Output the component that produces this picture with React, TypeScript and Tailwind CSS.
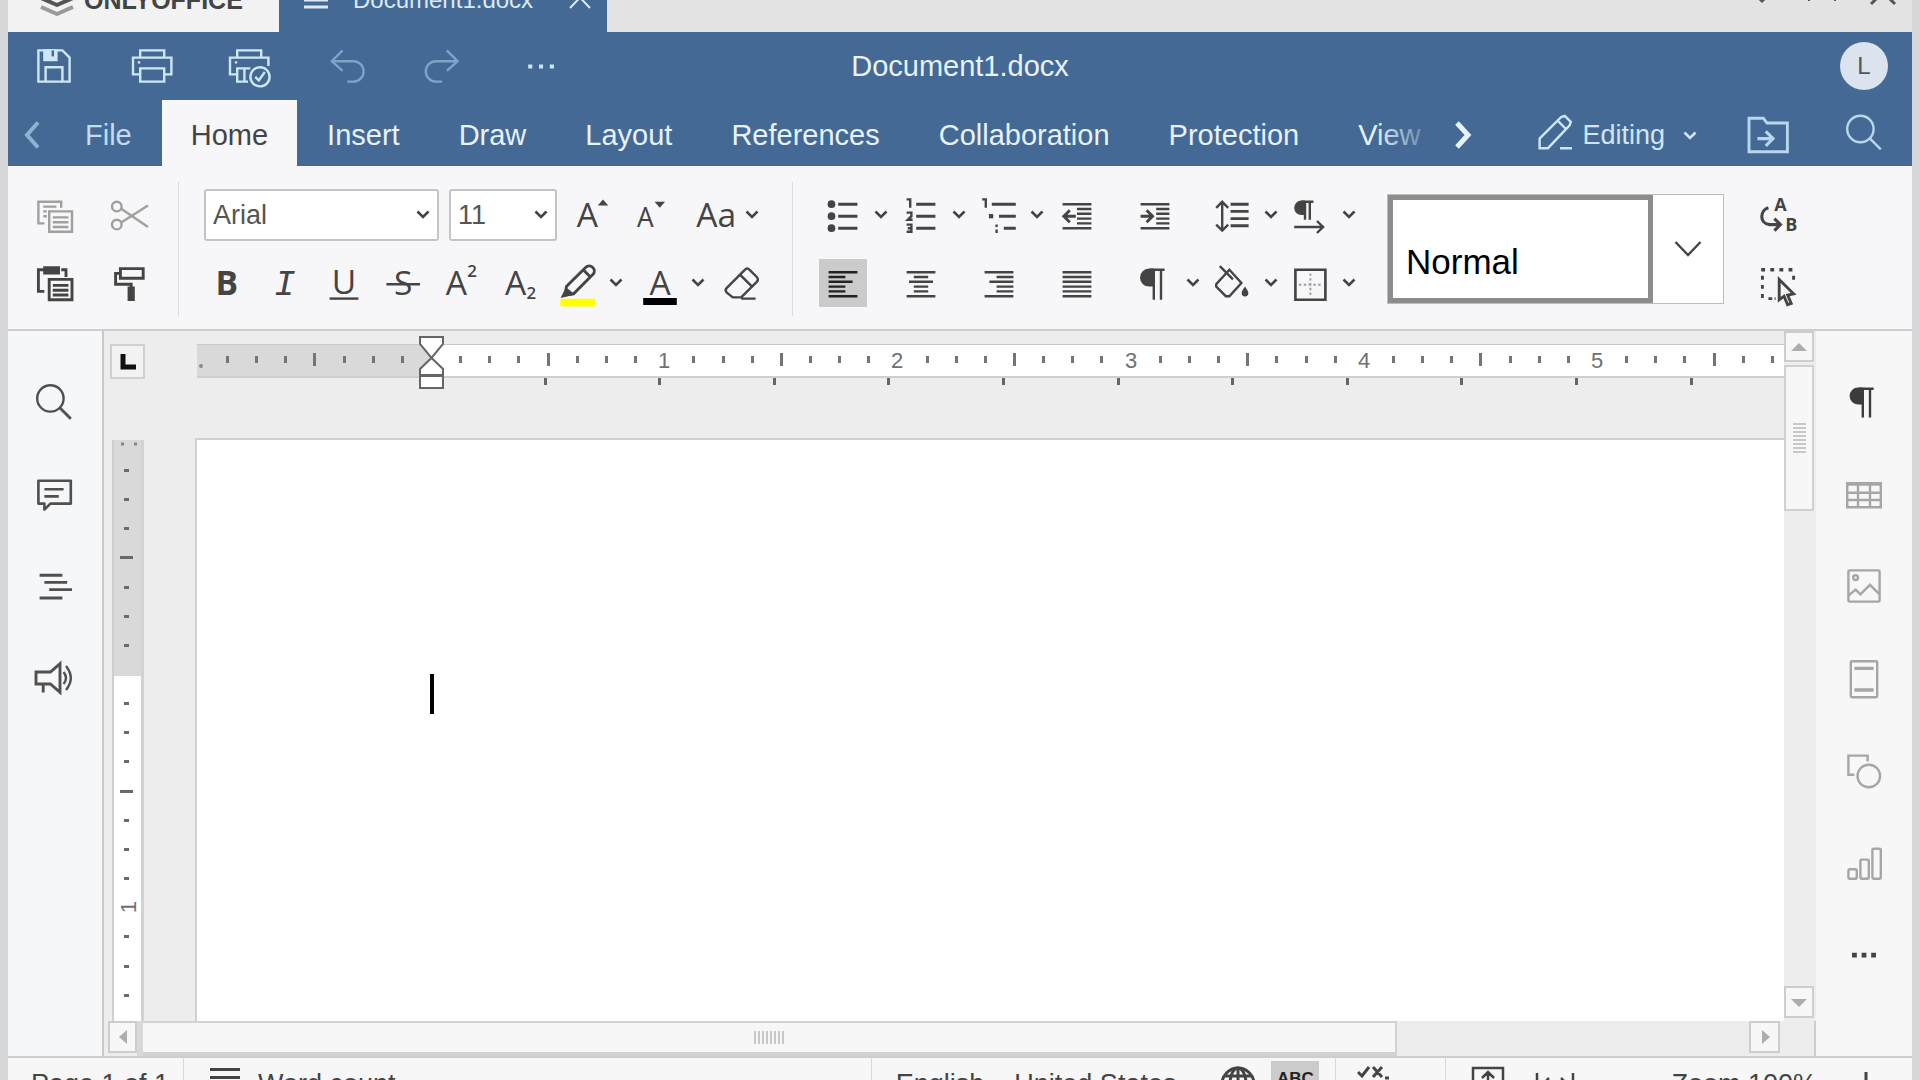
import React from "react";

type IconProps = { children: React.ReactNode; className?: string; label?: string };

/* 20-unit icon grid drawn at 48px */
function Icon({ children, className = "" }: IconProps) {
  return (
    <svg
      viewBox="0 0 20 20"
      className={`size-12 shrink-0 ${className}`}
      fill="none"
      stroke="currentColor"
      strokeWidth="1"
      aria-hidden="true"
    >
      {children}
    </svg>
  );
}

function IconButton({ children, label = "", className = "" }: IconProps) {
  return (
    <button type="button" aria-label={label} title={label} className={`flex size-12 shrink-0 items-center justify-center ${className}`}>
      <Icon>{children}</Icon>
    </button>
  );
}

function Caret({ className = "" }: { className?: string }) {
  return (
    <svg viewBox="0 0 14 9" className={`h-[9px] w-[14px] shrink-0 ${className}`} fill="none" stroke="currentColor" strokeWidth="2.6" aria-hidden="true">
      <path d="M1.5 1.5 7 7l5.500-5.500" />
    </svg>
  );
}

function DropButton({ label, className = "" }: { label: string; className?: string }) {
  return (
    <button type="button" aria-label={label} className={`flex h-12 shrink-0 items-center justify-center ${className}`}>
      <Caret />
    </button>
  );
}

function Letter({ x, y = 15, size = 14, weight = 400, children }: { x: number; y?: number; size?: number; weight?: number; children: string }) {
  return (
    <text x={x} y={y} fontSize={size} fontWeight={weight} fontFamily="'Open Sans', sans-serif" textAnchor="middle" fill="currentColor" stroke="none">
      {children}
    </text>
  );
}

const TABS = ["File", "Home", "Insert", "Draw", "Layout", "References", "Collaboration", "Protection", "View"];

function TitleStrip() {
  return (
    <div className="flex h-8 shrink-0 items-end overflow-hidden bg-[#e3e3e3]">
      <button type="button" className="flex h-16 w-[271px] shrink-0 items-center bg-[#f2f2f2] pl-[31px] text-[25px] leading-8 font-bold text-[#444]">
        <svg viewBox="0 0 36 48" className="mr-[9px] h-12 w-9 shrink-0" fill="none" strokeWidth="4" strokeLinejoin="round" aria-hidden="true">
          <path d="M2 13 18 6l16 7-16 7z" fill="#555" stroke="#555" strokeWidth="2" />
          <path d="m2 22 16 7 16-7" stroke="#555" />
          <path d="m2 31 16 7 16-7" stroke="#999" />
        </svg>
        ONLYOFFICE
      </button>
      <div className="flex h-16 w-[328px] shrink-0 items-center bg-[#446995] pl-[25px] text-[#dceaf7]">
        <svg viewBox="0 0 24 24" className="mr-[25px] size-6 shrink-0" stroke="currentColor" strokeWidth="3" aria-hidden="true">
          <path d="M0 5h24M0 12h24M0 19h24" />
        </svg>
        <span className="text-[24px] leading-8">Document1.docx</span>
        <button type="button" aria-label="Close tab" className="ml-[36px]">
          <svg viewBox="0 0 22 28" className="h-7 w-[22px]" stroke="currentColor" strokeWidth="2" aria-hidden="true">
            <path d="m1 1 20 21M21 1 1 22" />
          </svg>
        </button>
      </div>
      <div className="ml-auto flex h-16 items-center gap-[34px] pr-4 text-[#555]">
        <button type="button" aria-label="Minimize">
          <svg viewBox="0 0 24 48" className="h-12 w-6" fill="none" stroke="currentColor" strokeWidth="3" aria-hidden="true">
            <path d="m2 15 10 10 10-10" />
          </svg>
        </button>
        <button type="button" aria-label="Restore">
          <svg viewBox="0 0 28 48" className="h-12 w-7" fill="none" stroke="currentColor" strokeWidth="2" aria-hidden="true">
            <path d="M1 25V9h17M27 25V15" />
          </svg>
        </button>
        <button type="button" aria-label="Close">
          <svg viewBox="0 0 26 48" className="h-12 w-[26px]" stroke="currentColor" strokeWidth="3" aria-hidden="true">
            <path d="m1 4 24 24M25 4 1 28" />
          </svg>
        </button>
      </div>
    </div>
  );
}

function Header() {
  return (
    <header className="grid h-[68px] shrink-0 grid-cols-[1fr_auto_1fr] items-center bg-[#446995] text-[#cfe6f8]">
      <div className="flex items-center gap-[49px] pl-[22px]">
        <IconButton label="Save">
          <path d="M3.500 3.500h10l3 3v10h-13z" />
          <path d="M6 3.500h5v4H6z" fill="currentColor" />
          <path d="M9.500 3.500v2.500" stroke="#446995" />
          <path d="M6.500 16.500v-6h7v6" />
        </IconButton>
        <IconButton label="Print">
          <path d="M5.500 7V3.500h10V7M5.500 13.500h-3v-7h16v7h-3" />
          <path d="M5.500 11h10v5.500h-10z" />
          <path d="M4.500 8.500h1" />
        </IconButton>
        <IconButton label="Quick print">
          <path d="M5.500 7V3.500h10V7M5.500 13.500h-3v-7h16v3.500" />
          <path d="M10 16.500H5.500V11h5.500M8.500 11.500v5M4.500 8.500h1" />
          <circle cx="15" cy="14.500" r="4" />
          <path d="m13 14.500 1.500 1.500 2.500-3.500" />
        </IconButton>
        <IconButton label="Undo" className="text-[#7fa3c6]">
          <path d="M9 3.500 4.500 8 9 12M4.500 8h9a4.250 4.250 0 0 1 0 8.500H11" />
        </IconButton>
        <IconButton label="Redo" className="text-[#7fa3c6]">
          <path d="m12 3.500 4.500 4.500-4.500 4M16.500 8h-9a4.250 4.250 0 0 0 0 8.500H10" />
        </IconButton>
        <IconButton label="More">
          <path d="M5.500 10.200h1.700M10 10.200h1.700M14.500 10.200h1.700" strokeWidth="1.700" />
        </IconButton>
      </div>
      <h1 className="text-[29px] leading-9 text-[#e6f2fc]">Document1.docx</h1>
      <button type="button" aria-label="User L" className="mr-6 flex size-12 items-center justify-center justify-self-end rounded-full bg-[#dbe3ee] text-[24px] leading-8 text-[#555]">
        L
      </button>
    </header>
  );
}

function TabRow() {
  return (
    <nav aria-label="Ribbon tabs" className="flex h-[66px] shrink-0 bg-[#446995] text-[29px] leading-9 text-[#e6f2fc]">
      <button type="button" aria-label="Scroll tabs left" className="flex w-12 shrink-0 items-center justify-center pt-1 text-[#8fb2d2]">
        <svg viewBox="0 0 18 28" className="h-7 w-[18px]" fill="none" stroke="currentColor" strokeWidth="4" aria-hidden="true">
          <path d="M15 1.500 4 14l11 12.500" />
        </svg>
      </button>
      <div className="relative flex min-w-0 flex-1 gap-px overflow-hidden">
        {TABS.map((t) => (
          <button
            key={t}
            type="button"
            aria-current={t === "Home" ? "page" : undefined}
            className={`shrink-0 px-[29px] pt-1 ${t === "Home" ? "bg-[#f7f7f9] text-[#444]" : t === "File" ? "text-[#c4dcf0]" : ""}`}
          >
            {t}
          </button>
        ))}
        <div className="pointer-events-none absolute inset-y-0 right-0 w-16 bg-linear-to-r from-[#446995]/0 to-[#446995]" />
      </div>
      <button type="button" aria-label="Scroll tabs right" className="flex w-12 shrink-0 items-center justify-center pt-1">
        <svg viewBox="0 0 18 28" className="h-7 w-[18px]" fill="none" stroke="currentColor" strokeWidth="5" aria-hidden="true">
          <path d="M3 2l11 12L3 26" />
        </svg>
      </button>
      <button type="button" className="ml-[43px] flex shrink-0 items-center pt-1 text-[27px] text-[#cfe6f8]">
        <Icon className="mr-[4px]">
          <path d="M4 15.500v-4L13 2.500l1.500-.5 2.500 2.500-.5 1.500-9 9.500zM11.500 4l3.500 3.500M12.500 15.500h5" />
        </Icon>
        Editing
        <Caret className="ml-[18px]" />
      </button>
      <div className="ml-[46px] flex shrink-0 items-center gap-[49px] pt-1 pr-6 text-[#b9d6ee]">
        <IconButton label="Open file location">
          <path d="M2.500 3h6l1.500 2h8.500v12h-16z" strokeWidth="1.200" />
          <path d="M6 11.500h6M9.500 8.500l3 3-3 3" strokeWidth="1.300" />
        </IconButton>
        <IconButton label="Search">
          <circle cx="8.500" cy="7.500" r="5.500" />
          <path d="m12.500 11.500 4.500 4.500" />
        </IconButton>
      </div>
    </nav>
  );
}

function Combo({ label, value, options, className }: { label: string; value: string; options: string[]; className: string }) {
  return (
    <label className={`relative flex h-[52px] shrink-0 items-center ${className}`}>
      <span className="sr-only">{label}</span>
      <select
        defaultValue={value}
        className="h-full w-full appearance-none rounded-[3px] border-2 border-[#c4c4c6] bg-white pl-[7px] text-[27px] leading-8 text-[#555]"
      >
        {options.map((o) => (
          <option key={o}>{o}</option>
        ))}
      </select>
      <Caret className="pointer-events-none absolute right-[9px]" />
    </label>
  );
}

const Divider = ({ className }: { className: string }) => <div className={`h-[134px] w-px shrink-0 bg-[#dcdcde] ${className}`} />;

const pilcrow = (
  <>
    <path d="M9 4.500H7.500a3.250 3.250 0 0 0 0 6.500H9z" fill="currentColor" />
    <path d="M9.500 4v13M12.500 4v13M8 4.500h6" />
  </>
);

function ParagraphTools() {
  const rows: { label: string; drop: boolean; active?: boolean; art: React.ReactNode }[][] = [
    [
      {
        label: "Bullets",
        drop: true,
        art: (
          <>
            <path d="M8 5.500h8M8 10.500h8M8 15.500h8" strokeWidth="1.200" />
            <g fill="currentColor" stroke="none">
              <circle cx="5.200" cy="5.500" r="1.600" />
              <circle cx="5.200" cy="10.500" r="1.600" />
              <circle cx="5.200" cy="15.500" r="1.600" />
            </g>
          </>
        ),
      },
      {
        label: "Numbering",
        drop: true,
        art: (
          <>
            <path d="M8 5.500h8M8 10.500h8M8 15.500h8" strokeWidth="1.200" />
            <path d="M4 3.500h1.500V7M4 9h2v1.500L4.500 12H6.500M4 14h2v3H4M4.500 15.500H6" />
          </>
        ),
      },
      {
        label: "Multilevel list",
        drop: true,
        art: (
          <>
            <path d="M7 5.500h10M10 10.500h7M12 15.500h5" strokeWidth="1.200" />
            <path d="M3 3.500h1.500V7M9 14v1M9 16v1.500" />
            <path d="M5.800 10.500h1.800" strokeWidth="1.800" />
          </>
        ),
      },
      {
        label: "Decrease indent",
        drop: false,
        art: (
          <>
            <path d="M4 5.500h12M10 7.500h6M10 9.500h6M10 11.500h6M10 13.500h6M4 15.500h12" />
            <path d="M9.500 10.500h-5M7 8l-2.500 2.500L7 13" strokeWidth="1.200" />
          </>
        ),
      },
      {
        label: "Increase indent",
        drop: false,
        art: (
          <>
            <path d="M4 5.500h12M10.500 7.500H16M10.500 9.500H16M10.500 11.500H16M10.500 13.500H16M4 15.500h12" />
            <path d="M4 10.500h5M6.500 8 9 10.500 6.500 13" strokeWidth="1.200" />
          </>
        ),
      },
      {
        label: "Line spacing",
        drop: true,
        art: (
          <>
            <path d="M9 5.500h7.500M9 8.500h7.500M9 11.500h7.500M9 14.500h7.500" strokeWidth="1.200" />
            <path d="M5.500 4.500v12M3 7l2.500-2.500L8 7M3 14l2.500 2.500L8 14" />
          </>
        ),
      },
      {
        label: "Text direction",
        drop: true,
        art: (
          <>
            <path d="M7 4.500H6a2.250 2.250 0 0 0 0 5h1z" fill="currentColor" />
            <path d="M7.500 4v8M9.500 4v8M6 4.500h5M3 15h12.500M12.500 12.500 15 15l-2.500 2.500" />
          </>
        ),
      },
    ],
    [
      { label: "Align left", drop: false, active: true, art: <path d="M4 5.500h12M4 7.500h7M4 9.500h10M4 11.500h7M4 13.500h7M4 15.500h12" /> },
      { label: "Align center", drop: false, art: <path d="M4 5.500h12M7 7.500h6M5 9.500h10M7 11.500h6M7 13.500h6M4 15.500h12" /> },
      { label: "Align right", drop: false, art: <path d="M4 5.500h12M9 7.500h7M6 9.500h10M9 11.500h7M9 13.500h7M4 15.500h12" /> },
      { label: "Justify", drop: false, art: <path d="M4 5.500h12M4 7.500h12M4 9.500h12M4 11.500h12M4 13.500h12M4 15.500h12" /> },
      { label: "Nonprinting characters", drop: true, art: pilcrow },
      {
        label: "Shading",
        drop: true,
        art: (
          <>
            <path d="m8.500 4.500 5 5.500L8.500 15.500H7L3 11.500v-1zM4.500 3l5.500 5.500" />
            <path d="M15 11.500c1 1.500 1.400 2 1.400 2.700a1.400 1.400 0 0 1-2.800 0c0-.7.400-1.200 1.400-2.700z" fill="currentColor" stroke="none" />
          </>
        ),
      },
      {
        label: "Borders",
        drop: true,
        art: (
          <>
            <path d="M3.500 4.500h12.500v12.500h-12.500z" strokeWidth="1.100" />
            <path d="M9.750 6v10M5 10.750h10" strokeDasharray="1 1" strokeWidth=".8" opacity=".5" />
          </>
        ),
      },
    ],
  ];
  return (
    <div className="flex shrink-0 flex-col gap-4">
      {rows.map((row, i) => (
        <div key={i} className="grid h-[52px] grid-cols-[repeat(7,78px)] items-center">
          {row.map((b) => (
            <div key={b.label} className="flex">
              <IconButton label={b.label} className={b.active ? "bg-[#cbcbcb] text-[#222]" : ""}>
                {b.art}
              </IconButton>
              {b.drop && <DropButton label={`${b.label} options`} className="w-7" />}
            </div>
          ))}
        </div>
      ))}
    </div>
  );
}

function Toolbar() {
  return (
    <div role="toolbar" aria-label="Home" className="flex h-[165px] shrink-0 items-center border-b-2 border-[#cdcdcd] bg-[#f7f7f9] pt-0.5 pr-[110px] pl-[22px] text-[#444]">
      <div className="flex shrink-0 flex-col gap-4">
        <div className="flex h-[52px] items-center gap-7 text-[#a0a0a0]">
          <IconButton label="Copy">
            <path d="M6 13.500H3.500v-9h9.500V7M5.500 6.500H11M5.500 8.500H7M5.500 10.500H7" />
            <path d="M8 8.500h9.500v8.500H8zM9.500 11h6.500M9.500 13h6.500M9.500 15h6.500" />
          </IconButton>
          <IconButton label="Cut">
            <circle cx="4.500" cy="6.500" r="2" />
            <circle cx="4.500" cy="14" r="2" />
            <path d="M6.500 7.500 17.500 15M6.500 13 17.500 6" />
          </IconButton>
        </div>
        <div className="flex h-[52px] items-center gap-7">
          <IconButton label="Paste">
            <path d="M6 13.500H3.500v-9H6M13 4.500h2v3" strokeWidth="1.200" />
            <path d="M6 3.500h6v2.500H6z" fill="currentColor" />
            <path d="M8 8.500h9.500v8.500H8zM9.500 11h6.500M9.500 13h6.500M9.500 15h6.500" strokeWidth="1.200" />
          </IconButton>
          <IconButton label="Copy style">
            <path d="M6 4h9.500v4H6zM6 6H4v4.500h6.500v2" strokeWidth="1.200" />
            <path d="M9.500 12h2v5h-2z" fill="currentColor" />
          </IconButton>
        </div>
      </div>
      <Divider className="ml-6" />
      <div className="ml-[25px] flex shrink-0 flex-col gap-4">
        <div className="flex h-[52px] items-center gap-[10px]">
          <Combo label="Font" value="Arial" options={["Arial", "Calibri", "Times New Roman"]} className="w-[235px]" />
          <Combo label="Font size" value="11" options={["10", "11", "12", "14"]} className="w-[108px]" />
          <IconButton label="Increase font size">
            <Letter x={8.5}>A</Letter>
            <path d="m12.800 6 2.200-2.500L17.200 6z" fill="currentColor" stroke="none" />
          </IconButton>
          <IconButton label="Decrease font size">
            <Letter x={8.5} size={11}>A</Letter>
            <path d="m12.300 4.500 2.200 2.500L16.700 4.500z" fill="currentColor" stroke="none" />
          </IconButton>
          <div className="ml-2 flex">
            <IconButton label="Change case">
              <Letter x={10.5}>Aa</Letter>
            </IconButton>
            <DropButton label="Change case options" className="w-[26px]" />
          </div>
        </div>
        <div className="flex h-[52px] items-center gap-1">
          <div className="flex gap-[10px]">
            <IconButton label="Bold">
              <Letter x={9.5} weight={700}>B</Letter>
            </IconButton>
            <IconButton label="Italic">
              <text x="9.500" y="15" fontSize="15" fontStyle="italic" fontFamily="'Liberation Mono', monospace" textAnchor="middle" fill="currentColor" stroke="none">
                I
              </text>
            </IconButton>
            <IconButton label="Underline">
              <Letter x={10} y={14.5}>U</Letter>
              <path d="M4 16.500h12" />
            </IconButton>
            <IconButton label="Strikethrough">
              <Letter x={10.5}>S</Letter>
              <path d="M3.500 10.500h14" />
            </IconButton>
            <IconButton label="Superscript">
              <Letter x={8.500}>A</Letter>
              <Letter x={15} y={7.500} size={7} weight={600}>2</Letter>
            </IconButton>
            <IconButton label="Subscript">
              <Letter x={9}>A</Letter>
              <Letter x={15.500} y={16.500} size={7} weight={600}>2</Letter>
            </IconButton>
            <div className="flex">
              <IconButton label="Highlight color">
                <path d="M3.500 18.200h14.500" stroke="#ffff00" strokeWidth="3.200" />
                <path d="m6 11.500 8-8a2.100 2.100 0 0 1 3 3l-8 8-3.500.5zM13 4.500l3 3" strokeWidth="1.200" />
                <path d="M6 12.500 4.500 15.500l4-1z" fill="currentColor" />
              </IconButton>
              <DropButton label="Highlight color options" className="w-8" />
            </div>
          </div>
          <div className="flex">
            <IconButton label="Font color">
              <Letter x={10}>A</Letter>
              <path d="M3 17.700h14" stroke="#000" strokeWidth="3" />
            </IconButton>
            <DropButton label="Font color options" className="w-7" />
          </div>
          <IconButton label="Clear style">
            <path d="m4.500 12 7.500-7.500c.6-.6 1.400-.6 2 0l3 3c.6.6.6 1.400 0 2l-6.500 6.500H7L4.500 14c-.6-.6-.6-1.400 0-2zM10 6.500l5 5M10.500 16.500h6" />
          </IconButton>
        </div>
      </div>
      <Divider className="ml-[27px]" />
      <div className="ml-[26px] shrink-0">
        <ParagraphTools />
      </div>
      <div className="ml-[22px] flex h-[110px] min-w-0 flex-1 border border-[#bdbdbd] bg-white">
        <button type="button" className="flex min-w-0 flex-1 items-end border-[5px] border-[#8c8c8c] pb-4 pl-[13px] text-[35px] leading-10 text-black">
          Normal
        </button>
        <button type="button" aria-label="More styles" className="flex w-[70px] shrink-0 items-center justify-center">
          <svg viewBox="0 0 28 18" className="h-[18px] w-7" fill="none" stroke="currentColor" strokeWidth="2.400" aria-hidden="true">
            <path d="m1.500 2 12.500 13L26.500 2" />
          </svg>
        </button>
      </div>
      <div className="ml-[30px] flex shrink-0 flex-col gap-4">
        <div className="flex h-[52px] items-center">
          <IconButton label="Replace">
            <path d="M6 7C2.500 8 2 13.500 6.500 14h4M8.500 11.500 11 14l-2.500 2.500" strokeWidth="1.300" />
            <Letter x={11} y={8.500} size={7.500} weight={700}>A</Letter>
            <Letter x={15.500} y={16.500} size={7.500} weight={700}>B</Letter>
          </IconButton>
        </div>
        <div className="flex h-[52px] items-center">
          <IconButton label="Select">
            <path d="M3 4.500h14" strokeDasharray="1.600 2.200" strokeWidth="1.400" />
            <path d="M3.500 7v10.500M16.500 7v2" strokeDasharray="1.600 2.200" strokeWidth="1.200" />
            <path d="M6 16.500h3" strokeDasharray="1.600 1" strokeWidth="1.200" />
            <path d="m10.500 8.500 6 6-2.500.5 1.500 3.500-1.500.5-1.500-3.500-2 1.500z" strokeWidth="1.200" />
          </IconButton>
        </div>
      </div>
    </div>
  );
}

function LeftBar() {
  return (
    <aside className="flex w-24 shrink-0 flex-col items-center gap-11 border-r-2 border-[#c9c9cb] bg-[#f6f7f9] pt-[47px] pr-0.5 text-[#505050]">
      <IconButton label="Find">
        <circle cx="8.500" cy="8.500" r="5.500" />
        <path d="m12.500 12.500 4.500 4.500" strokeWidth="1.200" />
      </IconButton>
      <IconButton label="Comments">
        <path d="M3.500 4.500h13.500v9.500H8.500L6 16.500V14H3.500z" strokeWidth="1.100" strokeLinejoin="round" />
        <path d="M6 8h8M6 11h6" strokeWidth="1.100" />
      </IconButton>
      <IconButton label="Headings">
        <path d="M4 5.500h9.500M6 8.500h9.500M8 11.500h9.500M4 15h9.500" strokeWidth="1.200" />
      </IconButton>
      <IconButton label="Feedback">
        <path d="M2.500 7.500h6L12.500 4v12l-4-3.500h-6zM5.500 12.500V16" strokeWidth="1.200" />
        <path d="M14 7.500q2 2.500 0 5M15 5q4 5 0 10" />
      </IconButton>
    </aside>
  );
}

function RightBar() {
  return (
    <aside className="flex w-24 shrink-0 flex-col items-center gap-11 bg-[#f7f7f8] pt-[47px] text-[#a6a6a6]">
      <IconButton label="Paragraph settings" className="text-[#3c3c3c]">
        <path d="M9 4.500H7.500a3 3 0 0 0 0 6H9z" fill="currentColor" />
        <path d="M9.500 4v12.500M12.500 4v12.500M8 4.500h6" />
      </IconButton>
      <IconButton label="Table settings">
        <path d="M3 5.500h14v10H3zM3 9.500h14M3 12.500h14M7.500 5v10.500M12.500 5v10.500" />
        <path d="M2.500 5.800h15" strokeWidth="1.500" />
      </IconButton>
      <IconButton label="Image settings">
        <rect x="3.500" y="3.500" width="13" height="13" rx=".5" />
        <circle cx="6.500" cy="6.500" r="1" />
        <path d="M3.500 14 6.500 11.500 8.500 13.500 12.500 9.500 16.500 13.500" />
      </IconButton>
      <IconButton label="Header and footer settings">
        <rect x="4.500" y="3" width="11" height="15" rx=".5" />
        <path d="M6 6h8M6 15h8" strokeWidth="1.400" />
      </IconButton>
      <IconButton label="Shape settings">
        <path d="M6 12H3.500V4h8v2.500" />
        <circle cx="12" cy="12.500" r="4.700" />
      </IconButton>
      <IconButton label="Chart settings">
        <rect x="3.500" y="13" width="3.500" height="4" rx=".8" />
        <rect x="8.500" y="9" width="3.500" height="8" rx=".5" />
        <rect x="13.500" y="4.500" width="3.500" height="12.500" rx=".5" />
      </IconButton>
      <IconButton label="More settings" className="text-[#444]">
        <path d="M5 10.500h2M9 10.500h2M13 10.500h2" strokeWidth="2" />
      </IconButton>
    </aside>
  );
}

const STEP = 29.15;

function HorizontalRuler() {
  const ticks = Array.from({ length: 55 }, (_, i) => i - 7);
  return (
    <svg className="ml-[52px] h-[107px] min-w-0 flex-1" aria-label="Horizontal ruler">
      <rect x="0" y="14" width="100%" height="31" fill="#fff" />
      <rect x="0" y="14" width="234" height="31" fill="#d9d9d9" />
      <rect x="0" y="13" width="100%" height="1" fill="#c8c8c8" />
      <rect x="0" y="45" width="100%" height="2" fill="#cfcfcf" />
      <circle cx="4" cy="35" r="2" fill="#888" />
      {ticks.map((i) => {
        if (i === 0) return null;
        const x = Math.round(234 + i * STEP);
        if (i % 8 === 0)
          return (
            <text key={i} x={x} y="37" fontSize="22" textAnchor="middle" fill="#707070">
              {i / 8}
            </text>
          );
        return i % 4 === 0 ? (
          <rect key={i} x={x - 1} y="22" width="3" height="13" fill="#757575" />
        ) : (
          <rect key={i} x={x - 1} y="25" width="3" height="7" fill="#757575" />
        );
      })}
      {Array.from({ length: 14 }, (_, i) => (
        <rect key={i} x={Math.round(234 + (i + 1) * 114.6) - 2} y="47" width="3" height="7" fill="#666" />
      ))}
      <g fill="#fff" stroke="#666" strokeWidth="2">
        <path d="M223 6h23v7l-11.500 14L223 13z" />
        <path d="M223 44v-6l11.500-11L246 38v6z" />
        <path d="M223 45h23v12h-23z" />
      </g>
    </svg>
  );
}

function VerticalRuler() {
  return (
    <svg className="ml-2 h-full w-8 shrink-0" aria-label="Vertical ruler">
      <rect x="0" y="2" width="32" height="100%" fill="#fff" />
      <rect x="0" y="2" width="32" height="236" fill="#d9d9d9" />
      <rect x="0" y="2" width="2" height="100%" fill="#cfcfcf" />
      <rect x="29" y="2" width="3" height="100%" fill="#d2d2d2" />
      <path d="M9 6h3M22 6h3" stroke="#888" strokeWidth="3" />
      {Array.from({ length: 23 }, (_, k) => {
        const i = k - 7;
        if (i === 0) return null;
        const y = Math.round(236 + i * STEP);
        if (i % 8 === 0)
          return (
            <text key={i} x="0" y="0" fontSize="22" textAnchor="middle" fill="#707070" transform={`translate(24 ${y}) rotate(-90)`}>
              {i / 8}
            </text>
          );
        return i % 4 === 0 ? (
          <rect key={i} x="8" y={y - 1} width="13" height="3" fill="#6a6a6a" />
        ) : (
          <rect key={i} x="12" y={y - 1} width="5" height="3" fill="#6a6a6a" />
        );
      })}
    </svg>
  );
}

const SCROLL_BTN = "flex shrink-0 items-center justify-center border-2 border-[#cdcdcd] bg-[#f7f7f8] text-[#adadad]";

function Arrow({ d }: { d: string }) {
  return (
    <svg viewBox="0 0 16 16" className="size-4" fill="currentColor" aria-hidden="true">
      <path d={d} />
    </svg>
  );
}

function Editor() {
  return (
    <div className="flex min-w-0 flex-1 flex-col bg-[#ededed]">
      <div className="flex min-h-0 flex-1">
        <div className="flex min-w-0 flex-1 flex-col">
          <div className="flex h-[107px] shrink-0">
            <button type="button" aria-label="Tab stop type" className="mt-[13px] ml-1.5 flex h-[35px] w-[35px] shrink-0 items-center justify-center border-2 border-[#d0d0d0] bg-[#f2f2f2]">
              <svg viewBox="0 0 16 16" className="size-4" stroke="#111" strokeWidth="5" fill="none" aria-hidden="true">
                <path d="M3 0v13h13" />
              </svg>
            </button>
            <HorizontalRuler />
          </div>
          <div className="flex min-h-0 flex-1">
            <VerticalRuler />
            <main aria-label="Document page" className="ml-[51px] min-w-0 flex-1 border-t-2 border-l-2 border-[#d0d0d0] bg-white pt-[234px] pl-[233px]">
              <div className="h-10 w-1 bg-black" />
            </main>
          </div>
        </div>
        <div className="flex w-8 shrink-0 flex-col">
          <button type="button" aria-label="Scroll up" className={`${SCROLL_BTN} h-[31px] w-[30px]`}>
            <Arrow d="M0 12 8 4l8 8z" />
          </button>
          <div className="mt-[3px] flex h-[146px] w-[30px] shrink-0 flex-col items-center justify-center gap-0.5 border-2 border-[#d0d0d0] bg-[#f7f7f8]">
            {Array.from({ length: 8 }, (_, i) => (
              <div key={i} className="h-0.5 w-[13px] bg-[#c8c8c8]" />
            ))}
          </div>
          <div className="flex-1" />
          <button type="button" aria-label="Scroll down" className={`${SCROLL_BTN} mb-[3px] h-8 w-[30px]`}>
            <Arrow d="M0 5h16l-8 8z" />
          </button>
        </div>
      </div>
      <div className="flex h-[35px] shrink-0">
        <button type="button" aria-label="Scroll left" className={`${SCROLL_BTN} ml-1 h-8 w-[29px]`}>
          <Arrow d="M12 1v14L4 8z" />
        </button>
        <div className="w-1.5 shrink-0 bg-[#d8d8d8]" />
        <div className="flex min-w-0 grow-[1254] basis-0 items-center justify-center gap-0.5 border-t-2 border-r-2 border-b-4 border-[#d2d2d2] bg-[#f7f7f8]">
          {Array.from({ length: 8 }, (_, i) => (
            <div key={i} className="h-[13px] w-0.5 bg-[#c8c8c8]" />
          ))}
        </div>
        <div className="grow-[352] basis-0" />
        <button type="button" aria-label="Scroll right" className={`${SCROLL_BTN} h-8 w-[31px]`}>
          <Arrow d="M5 1v14l8-7z" />
        </button>
        <div className="w-9 shrink-0 border-r-2 border-[#cdcdcd]" />
      </div>
    </div>
  );
}

const StatusDivider = ({ className }: { className: string }) => <div className={`h-full w-px shrink-0 bg-[#d8d8d8] ${className}`} />;

function StatusBar() {
  return (
    <footer className="h-6 shrink-0 overflow-hidden border-t-2 border-[#cdcdcd] bg-[#f7f7f8] text-[27px] leading-8 text-[#444]">
      <div className="flex h-[52px] items-center">
        <span className="w-[175px] shrink-0 pl-[23px] whitespace-nowrap">Page 1 of 1</span>
        <StatusDivider className="" />
        <button type="button" className="flex shrink-0 items-center pl-[26px]">
          <svg viewBox="0 0 30 32" className="mr-[18px] h-8 w-[30px]" stroke="currentColor" strokeWidth="3" aria-hidden="true">
            <path d="M0 1.500h30M0 9.500h30M0 17.500h30M0 25.500h30" />
          </svg>
          Word count
        </button>
        <StatusDivider className="ml-auto" />
        <button type="button" className="shrink-0 pl-6 whitespace-nowrap">
          English – United States
        </button>
        <button type="button" aria-label="Document language" className="ml-[44px] shrink-0">
          <svg viewBox="0 0 36 36" className="size-9" fill="none" stroke="currentColor" strokeWidth="3" aria-hidden="true">
            <circle cx="18" cy="18" r="16" />
            <ellipse cx="18" cy="18" rx="8" ry="16" />
            <path d="M18 2v32M2 18h32M5 10h26M5 26h26" />
          </svg>
        </button>
        <button type="button" aria-label="Spell checking" className="mt-[3px] ml-[15px] flex h-12 w-12 shrink-0 items-center justify-center self-start bg-[#cbcbcb] pb-3 text-[17px] leading-6 font-bold text-[#222]">
          ABC
        </button>
        <StatusDivider className="ml-4" />
        <button type="button" aria-label="Track changes" className="ml-[21px] shrink-0">
          <svg viewBox="0 0 38 36" className="h-9 w-[38px]" fill="none" stroke="currentColor" strokeWidth="3" aria-hidden="true">
            <path d="m1 6 4 4 7-9M16 1l9 10M25 1l-9 10M28 12h4M6 20h22M6 28h22" />
          </svg>
        </button>
        <StatusDivider className="ml-[50px]" />
        <button type="button" aria-label="Fit to page" className="ml-[25px] shrink-0">
          <svg viewBox="0 0 34 36" className="h-9 w-[34px]" fill="none" stroke="currentColor" strokeWidth="2.500" aria-hidden="true">
            <path d="M2 2h30v32H2zM17 7v22M11 12l6-6 6 6M11 24l6 6 6-6" />
          </svg>
        </button>
        <button type="button" aria-label="Fit to width" className="ml-[30px] shrink-0">
          <svg viewBox="0 0 40 24" className="h-6 w-10" fill="none" stroke="currentColor" strokeWidth="2.500" aria-hidden="true">
            <path d="M2 1v22M38 1v22M7 13h26M14 6l-7 7 7 7M26 6l7 7-7 7" />
          </svg>
        </button>
        <button type="button" className="ml-[96px] shrink-0 whitespace-nowrap">
          Zoom 100%
        </button>
        <button type="button" aria-label="Zoom in" className="mr-[34px] ml-[37px] shrink-0">
          <svg viewBox="0 0 24 24" className="size-6" stroke="currentColor" strokeWidth="3" aria-hidden="true">
            <path d="M12 0v24M0 12h24" />
          </svg>
        </button>
      </div>
    </footer>
  );
}

export default function App() {
  return (
    <div className="flex h-screen flex-col overflow-hidden bg-[#d6d7d8] px-2 font-['Liberation_Sans',Arial,sans-serif]">
      <TitleStrip />
      <Header />
      <TabRow />
      <Toolbar />
      <div className="flex min-h-0 flex-1">
        <LeftBar />
        <Editor />
        <RightBar />
      </div>
      <StatusBar />
    </div>
  );
}
